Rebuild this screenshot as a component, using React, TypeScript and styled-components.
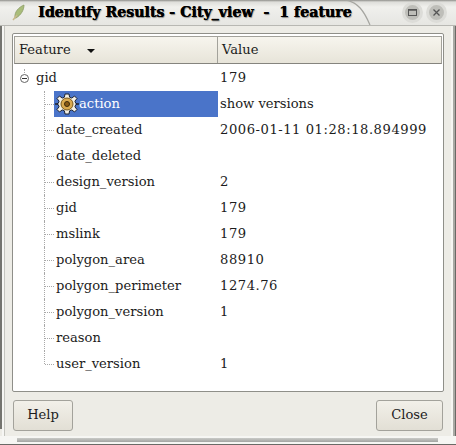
import React from "react";
import styled, { createGlobalStyle } from "styled-components";

const GlobalStyle = createGlobalStyle`
  html, body {
    margin: 0;
    padding: 0;
    background: #edece6;
  }
  #root {
    width: 456px;
    height: 445px;
    overflow: hidden;
  }
`;

const Window = styled.div`
  width: 456px;
  height: 445px;
  box-sizing: border-box;
  display: flex;
  flex-direction: column;
  font-family: "DejaVu Serif", serif;
  font-size: 13.1px;
  color: #1c1c1c;
  background: #edece6;
  overflow: hidden;
`;

const TitleBar = styled.div`
  height: 25px;
  flex: none;
  display: flex;
  align-items: center;
  padding: 0 9px 1px 11px;
  box-sizing: border-box;
  background: linear-gradient(#8f8f8b 0, #dededa 2px, #f0f0ed 7px, #e6e6e2 25px);
  position: relative;
`;

const TitleCurve = styled.svg`
  position: absolute;
  left: 340px;
  top: 0;
`;

const Title = styled.div`
  font-weight: bold;
  font-size: 14.2px;
  color: #000;
  margin-left: 12px;
  white-space: pre;
  text-shadow: 0.5px 0 0 #000, 1px 1px 1px #8a8a86;
  flex: 1;
  position: relative;
`;

const WinButton = styled.div`
  width: 15px;
  height: 15px;
  border-radius: 50%;
  border: 3px solid #dcdcd8;
  background: #bebeb9;
  display: flex;
  align-items: center;
  justify-content: center;
  margin-left: 3px;
  position: relative;
`;

const Content = styled.div`
  flex: 1;
  display: flex;
  flex-direction: column;
  padding: 7px 12px 0 12px;
  border-top: 1px solid #b8b8b3;
  min-height: 0;
  background:
    linear-gradient(#74746f, #74746f) no-repeat 0 0 / 2px 403px,
    linear-gradient(#f6f6f3, #f6f6f3) no-repeat 2px 0 / 2px 100%,
    linear-gradient(#c4c4be, #c4c4be) no-repeat 4px 0 / 1px 100%,
    linear-gradient(#f6f6f3, #f6f6f3) no-repeat 100% 0 / 5px 100%,
    #edece6;
  box-shadow: inset -1px 0 0 #6a6a66, inset -3px 0 0 #a9a9a4;
`;

const Panel = styled.div`
  height: 359px;
  flex: none;
  box-sizing: border-box;
  border: 1px solid #8f8f89;
  border-radius: 2px;
  padding: 2px 1px 0 1px;
  background: #fff;
  display: flex;
  flex-direction: column;
`;

const Header = styled.div`
  height: 28px;
  flex: none;
  display: grid;
  grid-template-columns: 202px 1fr;
  background: linear-gradient(#f7f5ee, #e7e4d9);
  border: 1px solid #a3a29b;
  border-bottom-color: #85847e;
  box-sizing: border-box;
`;

const HeaderCell = styled.div`
  display: flex;
  align-items: center;
  padding-left: 4px;
  padding-bottom: 2px;
  & + & {
    border-left: 1px solid #a3a29b;
  }
`;

const SortArrow = styled.span`
  margin-left: 16px;
  margin-top: 3px;
  width: 0;
  height: 0;
  border-left: 4px solid transparent;
  border-right: 4px solid transparent;
  border-top: 4px solid #111;
`;

const Rows = styled.div`
  display: flex;
  flex-direction: column;
  padding-top: 1px;
`;

const Row = styled.div`
  height: 26px;
  display: grid;
  grid-template-columns: 204px 1fr;
  align-items: stretch;
`;

const NameCell = styled.div`
  display: flex;
  align-items: center;
  min-width: 0;
`;

const ValueCell = styled.div<{ $numeric?: boolean }>`
  display: flex;
  align-items: center;
  padding-left: 2px;
  white-space: pre;
  padding-bottom: 1px;
  letter-spacing: ${(p) => (p.$numeric ? "0.55px" : "0")};
`;

const Expander = styled.span`
  width: 9px;
  height: 9px;
  box-sizing: border-box;
  margin-left: 6px;
  border: 1px solid #666;
  border-radius: 50%;
  display: flex;
  align-items: center;
  justify-content: center;
  background: #fff;
  position: relative;
  &::before {
    content: "";
    width: 5px;
    height: 1px;
    background: #333;
  }
  &::after {
    content: "";
    position: absolute;
    left: 3px;
    top: -6px;
    height: 4px;
    border-left: 1px dotted #aaa;
  }
`;

const TopLabel = styled.span`
  margin-left: 7px;
  padding-bottom: 1px;
`;

const Branch = styled.span<{ $last?: boolean }>`
  width: 10px;
  margin-left: 30px;
  align-self: stretch;
  flex: none;
  position: relative;
  &::before {
    content: "";
    position: absolute;
    left: 0;
    top: 0;
    height: ${(p) => (p.$last ? "13px" : "26px")};
    border-left: 1px dotted #a8a8a8;
  }
  &::after {
    content: "";
    position: absolute;
    left: 1px;
    right: 0;
    top: 13px;
    border-top: 1px dotted #a8a8a8;
  }
`;

const ChildLabel = styled.span<{ $selected?: boolean }>`
  flex: 1;
  align-self: stretch;
  display: flex;
  align-items: center;
  padding-left: ${(p) => (p.$selected ? "1px" : "2px")};
  padding-bottom: 1px;
  white-space: pre;
  ${(p) => p.$selected && "background: #4a74c9; color: #fff;"}
`;

const Footer = styled.div`
  display: flex;
  justify-content: space-between;
  padding: 8px 1px 0 1px;
`;

const Button = styled.div<{ $width: number }>`
  width: ${(p) => p.$width}px;
  height: 31px;
  box-sizing: border-box;
  border: 1px solid #a3a29b;
  border-radius: 3px;
  background: linear-gradient(#f2f0e9, #e2dfd5);
  display: flex;
  align-items: center;
  justify-content: center;
  padding-bottom: 2px;
`;

const BottomFrame = styled.div`
  height: 9px;
  flex: none;
  padding: 2px 18px 0 17px;
  background: #f6f6f3;
  border-bottom: 1px solid #6a6a66;
  box-sizing: border-box;
`;

const BottomGroove = styled.div`
  height: 4px;
  background: linear-gradient(#c9cac7, #a3a4a2);
`;

const Cog = () => (
  <svg width="24" height="24" viewBox="0 0 24 24">
    <path
      d="M10 2h4l.6 3.200 2.200.9L19.500 4l2.500 2.500-2.100 2.700.9 2.200L24 12l-3.200.6-.9 2.200L22 17.500 19.500 20l-2.700-2.100-2.200.9L14 22h-4l-.6-3.200-2.200-.9L4.500 20 2 17.500l2.100-2.700-.9-2.200L0 12l3.200-.6.900-2.200L2 6.500 4.500 4l2.700 2.100 2.200-.9z"
      fill="#f4f1e6"
      stroke="#1c2233"
    />
    <circle cx="12" cy="12" r="6" fill="#d9a94f" stroke="#7a5a1e" />
    <circle cx="12" cy="12" r="2.500" fill="#8a5a14" stroke="#3c2a0c" />
  </svg>
);

const Leaf = ({ name, value, last }: { name: string; value: string; last?: boolean }) => (
  <Row>
    <NameCell>
      <Branch $last={last} />
      <ChildLabel>{name}</ChildLabel>
    </NameCell>
    <ValueCell $numeric>{value}</ValueCell>
  </Row>
);

const attributes = [
  ["date_created", "2006-01-11 01:28:18.894999"],
  ["date_deleted", ""],
  ["design_version", "2"],
  ["gid", "179"],
  ["mslink", "179"],
  ["polygon_area", "88910"],
  ["polygon_perimeter", "1274.76"],
  ["polygon_version", "1"],
  ["reason", ""],
];

export default function App() {
  return (
    <Window>
      <GlobalStyle />
      <TitleBar>
        <TitleCurve width="40" height="25" viewBox="0 0 40 25">
          <path d="M5 0 C18 2 24 11 30 25" fill="none" stroke="#a5a5a0" strokeWidth="1.200" />
        </TitleCurve>
        <svg width="15" height="18" viewBox="0 0 15 18">
          <path d="M4 15 C3 9 8 4 13 2 C13 7 10 12 5 15 Z" fill="#a9bd7a" stroke="#8a9a66" strokeWidth="0.800" />
          <path d="M2 17 L6 12" stroke="#c9b98a" strokeWidth="1.500" />
        </svg>
        <Title>Identify Results - City_view  -  1 feature</Title>
        <WinButton>
          <svg width="9" height="9" viewBox="0 0 9 9">
            <rect x="0.500" y="1.500" width="8" height="6" fill="none" stroke="#555" />
            <path d="M0 2h9" stroke="#555" strokeWidth="1.500" />
          </svg>
        </WinButton>
        <WinButton>
          <svg width="9" height="9" viewBox="0 0 9 9">
            <path d="M1.500 1.500l6 6M7.500 1.500l-6 6" stroke="#555" strokeWidth="1.300" />
          </svg>
        </WinButton>
      </TitleBar>
      <Content>
        <Panel>
          <Header>
            <HeaderCell>
              Feature
              <SortArrow />
            </HeaderCell>
            <HeaderCell>Value</HeaderCell>
          </Header>
          <Rows>
            <Row>
              <NameCell>
                <Expander />
                <TopLabel>gid</TopLabel>
              </NameCell>
              <ValueCell $numeric>179</ValueCell>
            </Row>
            <Row>
              <NameCell>
                <Branch />
                <ChildLabel $selected>
                  <Cog />
                  action
                </ChildLabel>
              </NameCell>
              <ValueCell>show versions</ValueCell>
            </Row>
            {attributes.map(([name, value]) => (
              <Leaf key={name} name={name} value={value} />
            ))}
            <Leaf name="user_version" value="1" last />
          </Rows>
        </Panel>
        <Footer>
          <Button $width={60}>Help</Button>
          <Button $width={67}>Close</Button>
        </Footer>
      </Content>
      <BottomFrame>
        <BottomGroove />
      </BottomFrame>
    </Window>
  );
}
